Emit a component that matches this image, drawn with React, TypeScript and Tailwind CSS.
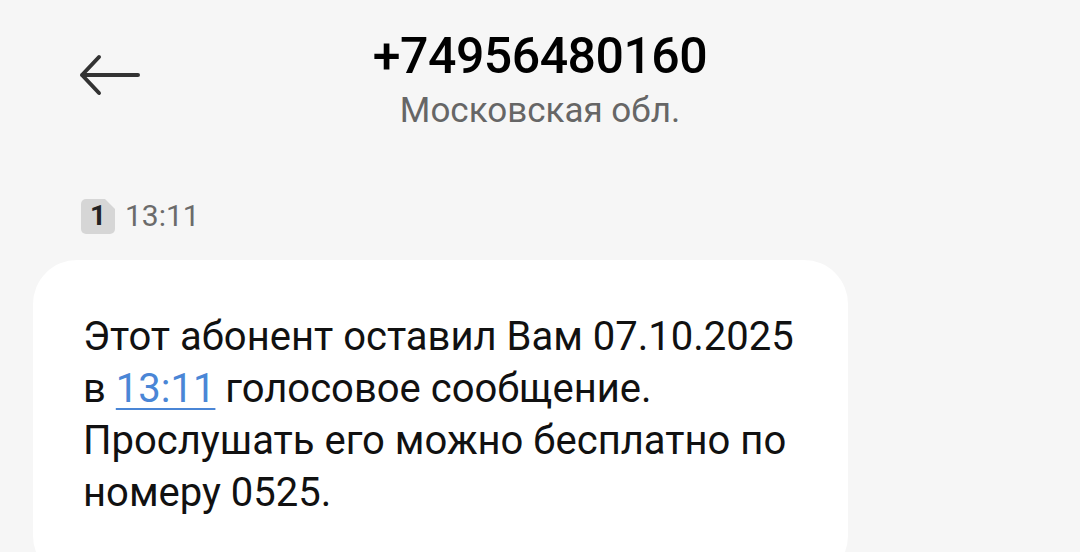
import React from "react";

function BackArrow() {
  return (
    <svg width="64" height="44" viewBox="0 0 64 44" fill="none">
      <path
        d="M60 22H4M4 22L21 4M4 22L21 40"
        stroke="#333333"
        strokeWidth="4"
        strokeLinecap="round"
        strokeLinejoin="round"
      />
    </svg>
  );
}

function SimBadge() {
  return (
    <div className="relative w-[34px] h-[35px]">
      <svg width="34" height="35" viewBox="0 0 34 35" className="absolute inset-0">
        <path
          d="M5 0H24L34 10V30a5 5 0 0 1 -5 5H5a5 5 0 0 1 -5 -5V5a5 5 0 0 1 5 -5Z"
          fill="#d6d6d6"
        />
      </svg>
      <span className="absolute inset-0 flex items-center justify-center text-[28px] leading-none font-bold text-[#222]">
        1
      </span>
    </div>
  );
}

export default function App() {
  return (
    <div
      className="w-[1080px] h-[552px] overflow-hidden bg-[#f6f6f6]"
      style={{ fontFamily: "Roboto, 'Noto Sans', sans-serif" }}
    >
      <div className="relative h-[180px]">
        <div className="absolute left-[78px] top-[53px]">
          <BackArrow />
        </div>
        <div className="flex flex-col items-center pt-[28px]">
          <div className="text-[50px] leading-[56px] font-medium text-black tracking-[-0.5px]">
            +74956480160
          </div>
          <div className="mt-[6px] text-[35px] leading-[42px] text-[#666666]">
            Московская обл.
          </div>
        </div>
      </div>
      <div className="flex items-center gap-[10px] pl-[81px] pt-[18px]">
        <SimBadge />
        <span className="text-[30px] leading-[36px] text-[#6b6b6b]">13:11</span>
      </div>
      <div className="ml-[33px] mt-[26px] w-[815px] h-[320px] rounded-[44px] bg-white pl-[50px] pt-[51px]">
        <p className="text-[40px] leading-[52px] text-[#111]">
          Этот абонент оставил Вам 07.10.2025
          <br />в{" "}
          <span className="text-[#4a86d6] underline decoration-[2px] underline-offset-[6px]">
            13:11
          </span>{" "}
          голосовое сообщение.
          <br />
          Прослушать его можно бесплатно по
          <br />
          номеру 0525.
        </p>
      </div>
    </div>
  );
}
